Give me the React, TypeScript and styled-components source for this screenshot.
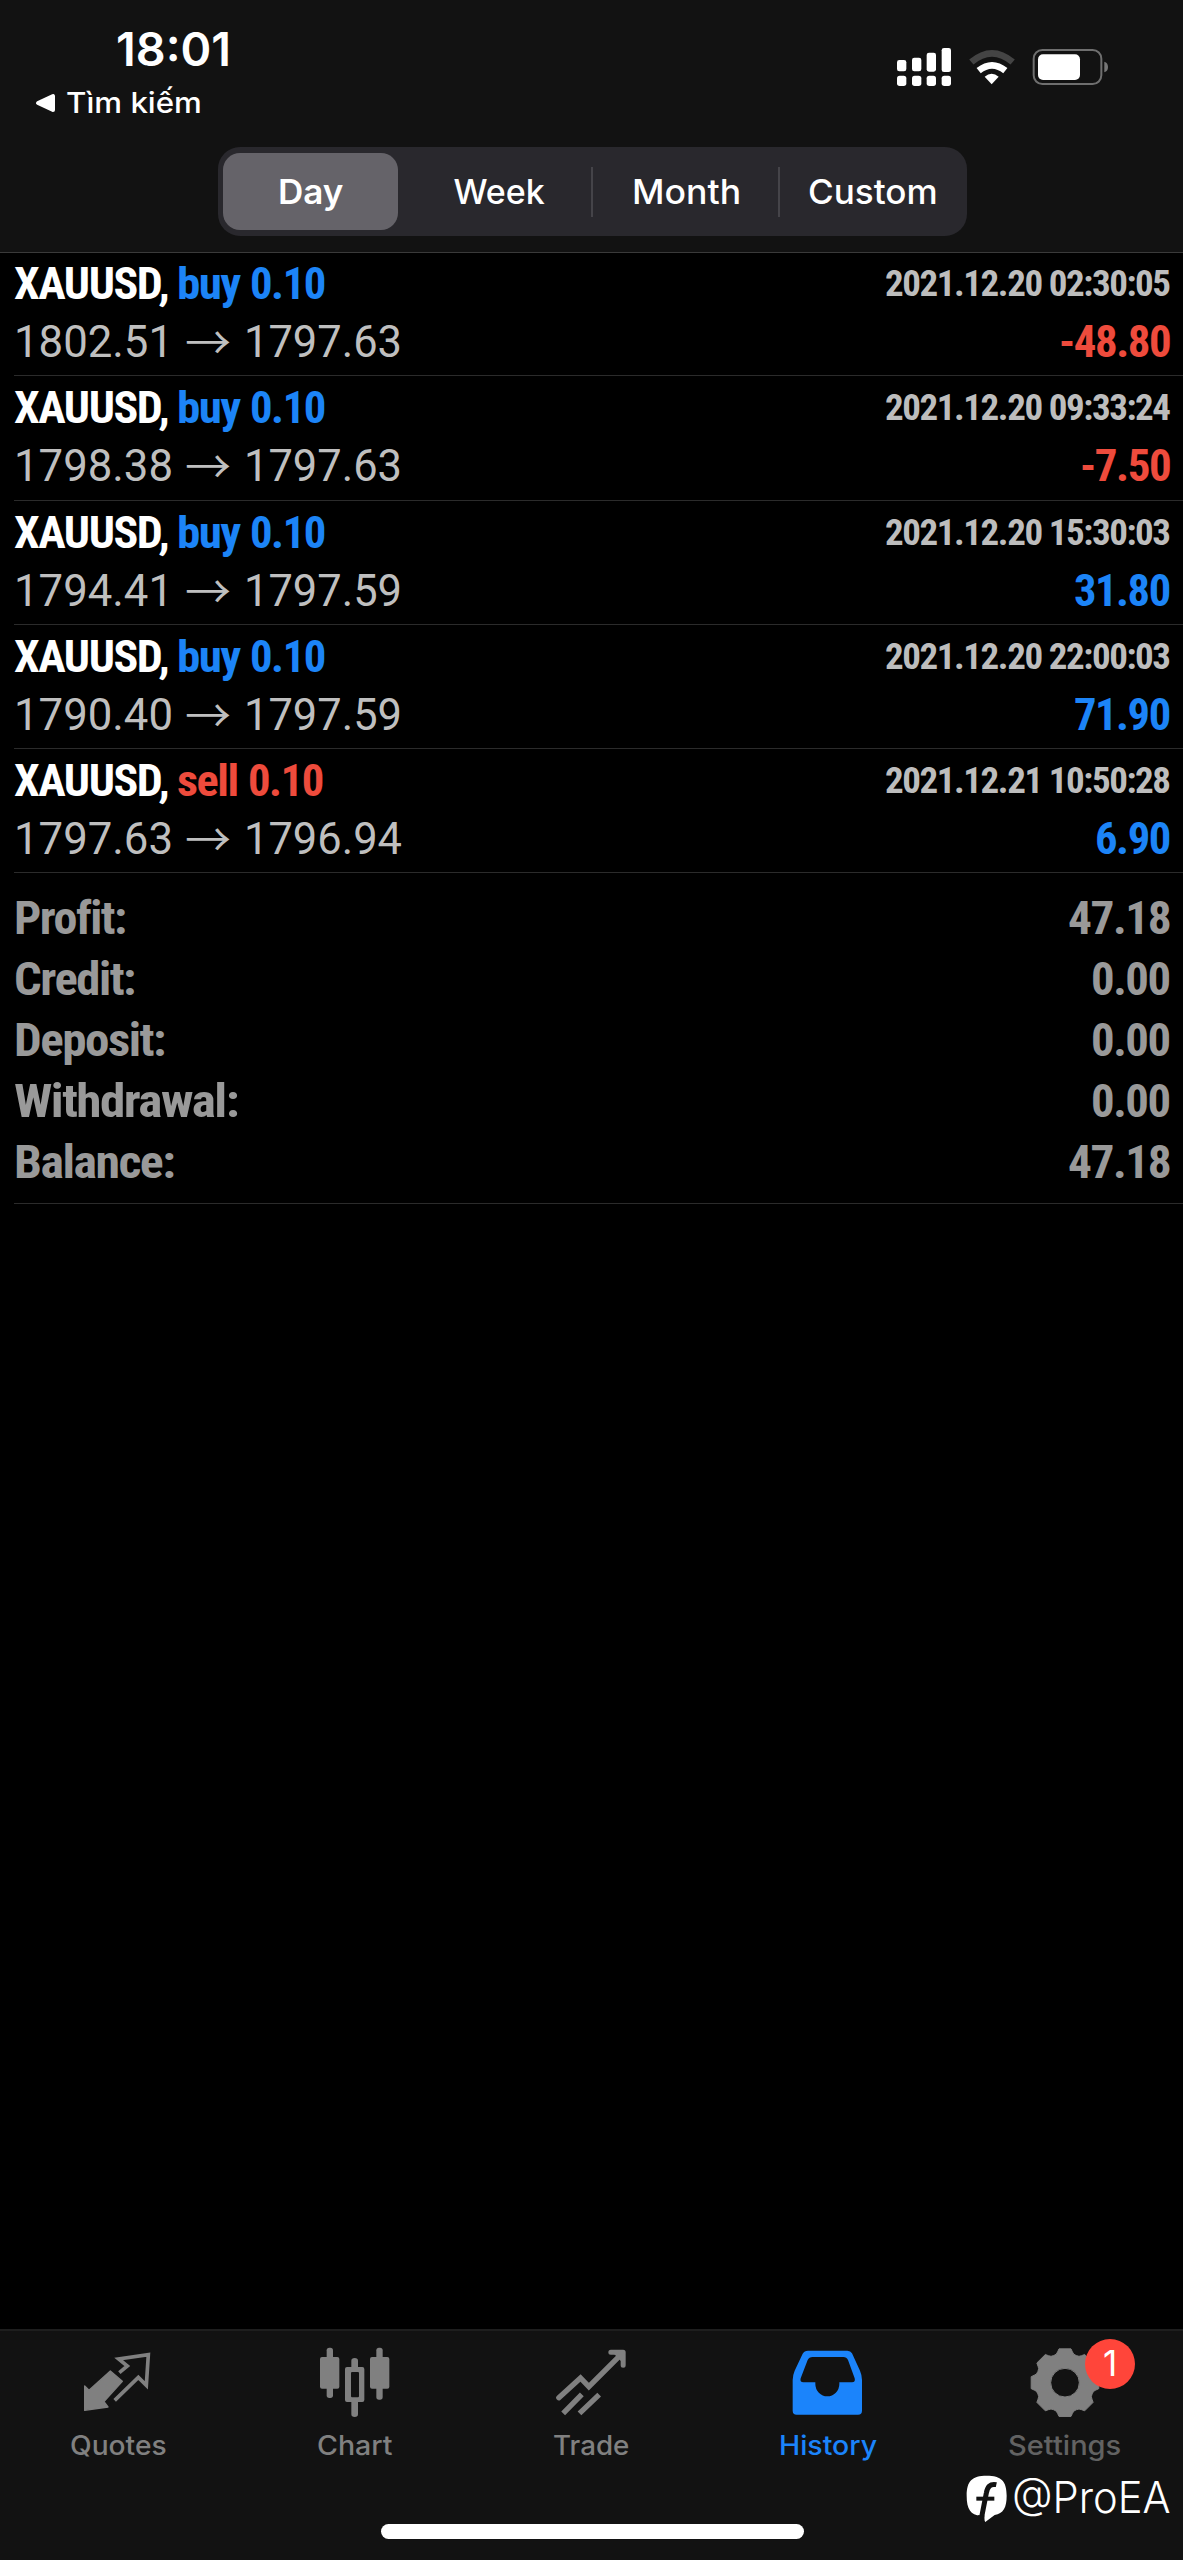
import React, { useLayoutEffect, useRef, useState } from 'react';
import styled, { createGlobalStyle } from 'styled-components';

const BLUE = '#1c84f7';
const RED = '#ee4b3c';
const BAR = '#121212';
const GREY = '#808080';

const Global = createGlobalStyle`
  * { box-sizing: border-box; }
  html, body { margin: 0; padding: 0; background: #000; }
  body { font-family: Inter, "Liberation Sans", sans-serif; }
`;

const Screen = styled.div`
  position: relative;
  display: flex;
  flex-direction: column;
  width: 1183px;
  height: 2560px;
  background: #000;
  overflow: hidden;
`;

/* ---------- text squeezed to a given advance width ---------- */
type Align = 'left' | 'right';

const FitBox = styled.span<{ $w: number; $align: Align }>`
  display: inline-flex;
  flex: none;
  width: ${p => p.$w}px;
  justify-content: ${p => (p.$align === 'right' ? 'flex-end' : 'flex-start')};
`;

const FitInner = styled.span<{ $align: Align }>`
  flex: none;
  white-space: pre;
  transform-origin: ${p => p.$align} center;
`;

function Fit({ w, align = 'left', children }: { w: number; align?: Align; children: React.ReactNode }) {
  const ref = useRef<HTMLSpanElement>(null);
  const [scale, setScale] = useState(1);
  useLayoutEffect(() => {
    if (ref.current && ref.current.offsetWidth) setScale(w / ref.current.offsetWidth);
  }, [w, children]);
  return (
    <FitBox $w={w} $align={align}>
      <FitInner ref={ref} $align={align} style={{ transform: `scaleX(${scale})` }}>
        {children}
      </FitInner>
    </FitBox>
  );
}

/* ---------- header ---------- */
const Header = styled.header`
  flex: none;
  height: 252px;
  background: ${BAR};
  box-shadow: 0 1px 0 #3a3a3a;
`;

const StatusBar = styled.div`
  display: flex;
  justify-content: space-between;
  height: 147px;
  padding: 21px 53px 0 35px;
`;

const Clock = styled.div`
  padding-left: 80.5px;
  height: 64px;
  line-height: 56px;
  font-size: 46.5px;
  font-weight: 600;
  color: #fff;
`;

const BackLink = styled.div`
  display: flex;
  align-items: center;
  gap: 10px;
  line-height: 36px;
  font-size: 28.5px;
  font-weight: 450;
  color: #fff;
`;

const StatusIcons = styled.svg`
  width: 240px;
  height: 50px;
  margin-top: 19px;
  margin-right: 10px;
`;

const Segments = styled.div`
  display: flex;
  align-items: center;
  width: 749px;
  height: 89px;
  margin-left: 218px;
  border-radius: 22px;
  background: #29282d;
`;

const Segment = styled.div<{ $divided?: boolean }>`
  display: flex;
  flex: 1;
  align-items: center;
  justify-content: center;
  height: 50px;
  box-shadow: ${p => (p.$divided ? '-2px 0 0 #454449' : 'none')};
  font-size: 34px;
  line-height: 50px;
  font-weight: 480;
  color: #fff;
`;

const Pill = styled.div`
  display: flex;
  align-items: center;
  justify-content: center;
  width: 175px;
  height: 77px;
  margin-right: 2px;
  border-radius: 17px;
  background: #656369;
  font-weight: 560;
`;

/* ---------- deals ---------- */
const Condensed = styled.div`
  font-family: Roboto, "Liberation Sans", sans-serif;
  font-stretch: 82%;
  font-weight: 700;
  letter-spacing: -1.4px;
`;

const Deal = styled(Condensed)`
  display: grid;
  grid-template-columns: auto auto;
  grid-template-rows: 62px 55px;
  justify-content: space-between;
  height: 124.3px;
  margin-left: 14px;
  padding-top: 1px;
  padding-right: 13px;
  border-bottom: 1px solid #2b2b2b;
`;

const Title = styled.div`
  display: flex;
  font-size: 44px;
  line-height: 62px;
  color: #fff;
`;

const Side = styled.span<{ $sell?: boolean }>`
  display: flex;
  gap: 10px;
  color: ${p => (p.$sell ? RED : BLUE)};
`;

const DateTime = styled.div`
  display: flex;
  justify-content: flex-end;
  font-size: 36.2px;
  line-height: 61px;
  color: #bdbdbd;
`;

const Prices = styled.div`
  display: flex;
  font-size: 44px;
  line-height: 55px;
  font-weight: 370;
  font-stretch: 100%;
  letter-spacing: 0;
  color: #bfbfbf;
`;

const Arrow = styled.span`
  width: 71px;
  padding-left: 12px;
  font-family: "Noto Sans CJK SC", sans-serif;
  font-weight: 350;
  font-size: 46px;
  line-height: 49px;
`;

const Result = styled.div<{ $loss?: boolean }>`
  display: flex;
  justify-content: flex-end;
  font-size: 44px;
  line-height: 55px;
  color: ${p => (p.$loss ? RED : BLUE)};
`;

const Summary = styled(Condensed)`
  margin-left: 14px;
  padding: 14.3px 13px 10.7px 0;
  border-bottom: 1px solid #2b2b2b;
`;

const SummaryRow = styled.div`
  display: flex;
  justify-content: space-between;
  height: 61px;
  font-size: 45.5px;
  line-height: 61px;
  color: #999;
`;

const Spacer = styled.div`
  flex: 1;
`;

/* ---------- tab bar ---------- */
const TabBar = styled.nav`
  position: relative;
  flex: none;
  display: flex;
  height: 231px;
  padding-top: 9px;
  border-top: 2px solid #1e1e1e;
  background: ${BAR};
`;

const Tab = styled.div<{ $active?: boolean }>`
  display: flex;
  flex: 1;
  flex-direction: column;
  align-items: center;
  color: ${p => (p.$active ? '#1b84fb' : GREY)};
`;

const TabIcon = styled.div`
  position: relative;
  width: 80px;
  height: 80px;
  svg { display: block; width: 80px; height: 80px; }
`;

const TabLabel = styled.div<{ $dim?: boolean }>`
  font-size: 27px;
  line-height: 51px;
  font-weight: 500;
  color: ${p => (p.$dim ? '#626262' : 'inherit')};
`;

const Badge = styled.span`
  position: absolute;
  left: 60.5px;
  top: -1.5px;
  width: 50px;
  height: 50px;
  border-radius: 50%;
  background: #ff453a;
  color: #fff;
  font-size: 35px;
  line-height: 49px;
  text-align: center;
`;

const HomeIndicator = styled.div`
  position: absolute;
  left: 381px;
  bottom: 21px;
  width: 423px;
  height: 15px;
  border-radius: 8px;
  background: #fff;
`;

const Watermark = styled.div`
  position: absolute;
  left: 966px;
  bottom: 33px;
  display: flex;
  align-items: center;
  gap: 4px;
  font-size: 43px;
  line-height: 60px;
  font-weight: 330;
  color: #fff;
  svg { width: 42px; height: 48px; margin-top: 4px; }
`;

/* ---------- drawings ---------- */
const gearPath = (() => {
  const cx = 845, cy = 218;
  const pts: string[] = [];
  for (let k = 0; k < 8; k++) {
    [[-22.5, 88], [-17, 89.5], [-13.5, 95], [-10, 103], [10, 103], [13.5, 95], [17, 89.5]].forEach(([d, r]) => {
      const a = ((k * 45 + d - 90) * Math.PI) / 180;
      pts.push(`${(cx + r * Math.cos(a)).toFixed(1)} ${(cy + r * Math.sin(a)).toFixed(1)}`);
    });
  }
  return `M${pts.join('L')}ZM888 218A43 43 0 1 0 802 218A43 43 0 1 0 888 218Z`;
})();

const QuotesIcon = () => (
  <svg viewBox="235 90 240 240" fill="none">
    <path d="M255 228L268 241L332 183L368 214L313 275L325 291L255 301Z" fill="currentColor" stroke="currentColor" strokeWidth="4" strokeLinejoin="round" />
    <path d="M359 188L383 168L357 147L446 134L440 226L416 202L345 271" stroke="currentColor" strokeWidth="11" />
  </svg>
);

const ChartIcon = () => (
  <svg viewBox="945 90 240 240" fill="currentColor">
    <rect x="960" y="141" width="58" height="95" rx="6" />
    <rect x="980" y="113" width="19" height="151" rx="8" />
    <rect x="1110" y="141" width="58" height="95" rx="6" />
    <rect x="1129" y="113" width="19" height="156" rx="8" />
    <path fillRule="evenodd" d="M1041 171H1054V152Q1054 144 1064 144Q1074 144 1074 152V171H1087Q1093 171 1093 177V270Q1093 276 1087 276H1074V313Q1074 321 1064 321Q1054 321 1054 313V276H1041Q1035 276 1035 270V177Q1035 171 1041 171ZM1056 186Q1053 186 1053 190V258Q1053 262 1056 262H1074Q1077 262 1077 258V190Q1077 186 1074 186Z" />
  </svg>
);

const TradeIcon = () => (
  <svg viewBox="454.5 90 240 240" fill="none" stroke="currentColor">
    <path d="M478 263L543 204L568 230L662 136" strokeWidth="16" strokeLinecap="round" />
    <path d="M634 127H671V166" strokeWidth="15" strokeLinecap="round" strokeLinejoin="round" />
    <path d="M645 130H670V156Z" fill="currentColor" strokeWidth="4" />
    <path d="M491 310L547 253M540 310L599 254" strokeWidth="16" />
  </svg>
);

const HistoryIcon = () => (
  <svg viewBox="24 30 240 240" fill="currentColor">
    <path fillRule="evenodd" d="M84 62H202Q212 62 216 70L240 122Q246 136 246 150V242Q246 254 234 254H50Q38 254 38 242V150Q38 136 44 122L68 71Q73 62 84 62ZM98 81Q87 81 83 90L62 145Q59 157 70 157H106V162A36 37 0 0 0 178 162V157H216Q227 157 224 145L204 90Q200 81 190 81Z" />
  </svg>
);

const SettingsIcon = () => (
  <svg viewBox="725 90 240 240" fill="currentColor">
    <path fillRule="evenodd" d={gearPath} stroke="currentColor" strokeWidth="3" strokeLinejoin="round" />
  </svg>
);

const BubbleLogo = () => (
  <svg viewBox="18 436 126 144" fill="none">
    <path d="M80 438C124 438 140 454 140 498C140 534 130 551 104 556L76 577L62 558C32 556 20 538 20 498C20 454 36 438 80 438Z" fill="#fff" />
    <path d="M109 465C90 461 82 472 79 490L65 562" stroke={BAR} strokeWidth="15" />
    <path d="M49 507H103" stroke={BAR} strokeWidth="12" />
    <path d="M54 557L73 557L74 580L54 580Z" fill={BAR} />
  </svg>
);

const PhoneStatus = () => (
  <StatusIcons viewBox="0 0 720 150">
    <g fill="#fff">
      <rect x="51" y="60" width="28" height="34" rx="7" />
      <rect x="96" y="53" width="28" height="41" rx="7" />
      <rect x="140" y="38" width="28" height="57" rx="7" />
      <rect x="185" y="24" width="28" height="72" rx="7" />
      <rect x="51" y="107" width="28" height="31" rx="8" />
      <rect x="96" y="107" width="28" height="31" rx="8" />
      <rect x="140" y="107" width="28" height="31" rx="8" />
      <rect x="185" y="107" width="28" height="31" rx="8" />
    </g>
    <g fill="none" strokeWidth="20">
      <path d="M274 66Q336 14 398 66" stroke="#444" />
      <path d="M296 92Q336 60 376 92" stroke="#fff" />
    </g>
    <path d="M314 110Q335 92 356 110L335 133Z" fill="#fff" />
    <rect x="461" y="30" width="203" height="102" rx="26" fill="none" stroke="#6f6f6f" strokeWidth="6" />
    <rect x="474" y="43" width="126" height="77" rx="15" fill="#fff" />
    <path d="M673 65Q684 68 684 81Q684 94 673 97Z" fill="#777" />
  </StatusIcons>
);

/* ---------- data ---------- */
interface DealData {
  side: 'buy' | 'sell';
  open: string;
  close: string;
  time: string;
  result: string;
  resultWidth: number;
}

const deals: DealData[] = [
  { side: 'buy', open: '1802.51', close: '1797.63', time: '2021.12.20 02:30:05', result: '-48.80', resultWidth: 111 },
  { side: 'buy', open: '1798.38', close: '1797.63', time: '2021.12.20 09:33:24', result: '-7.50', resultWidth: 90 },
  { side: 'buy', open: '1794.41', close: '1797.59', time: '2021.12.20 15:30:03', result: '31.80', resultWidth: 96 },
  { side: 'buy', open: '1790.40', close: '1797.59', time: '2021.12.20 22:00:03', result: '71.90', resultWidth: 96 },
  { side: 'sell', open: '1797.63', close: '1796.94', time: '2021.12.21 10:50:28', result: '6.90', resultWidth: 75 },
];

const totals = [
  { label: 'Profit:', labelWidth: 112, value: '47.18', valueWidth: 102 },
  { label: 'Credit:', labelWidth: 121, value: '0.00', valueWidth: 79 },
  { label: 'Deposit:', labelWidth: 151, value: '0.00', valueWidth: 79 },
  { label: 'Withdrawal:', labelWidth: 224, value: '0.00', valueWidth: 79 },
  { label: 'Balance:', labelWidth: 160, value: '47.18', valueWidth: 102 },
];

const segments = [
  { name: 'Day', width: 66 },
  { name: 'Week', width: 91 },
  { name: 'Month', width: 109 },
  { name: 'Custom', width: 130 },
];

const tabs = [
  { name: 'Quotes', width: 97, Icon: QuotesIcon },
  { name: 'Chart', width: 75, Icon: ChartIcon },
  { name: 'Trade', width: 76, Icon: TradeIcon },
  { name: 'History', width: 98, Icon: HistoryIcon },
  { name: 'Settings', width: 113, Icon: SettingsIcon },
];

export default function App() {
  return (
    <Screen>
      <Global />
      <Header>
        <StatusBar>
          <div>
            <Clock><Fit w={115.5}>18:01</Fit></Clock>
            <BackLink>
              <svg width="21" height="22" viewBox="0 0 21 22"><path d="M3 11L18 4V18Z" fill="#fff" stroke="#fff" strokeWidth="4" strokeLinejoin="round" /></svg>
              <Fit w={136}>Tìm kiếm</Fit>
            </BackLink>
          </div>
          <PhoneStatus />
        </StatusBar>
        <Segments>
          {segments.map((s, i) => (
            <Segment key={s.name} $divided={i > 1}>
              {i === 0 ? <Pill><Fit w={s.width}>{s.name}</Fit></Pill> : <Fit w={s.width}>{s.name}</Fit>}
            </Segment>
          ))}
        </Segments>
      </Header>

      <main>
        {deals.map(d => (
          <Deal key={d.time}>
            <Title>
              <Fit w={163}>XAUUSD, </Fit>
              <Side $sell={d.side === 'sell'}>
                <Fit w={d.side === 'sell' ? 61 : 63}>{d.side}</Fit>
                <Fit w={75}>0.10</Fit>
              </Side>
            </Title>
            <DateTime><Fit w={285} align="right">{d.time}</Fit></DateTime>
            <Prices>
              <Fit w={159}>{d.open}</Fit>
              <Arrow>→</Arrow>
              <Fit w={158}>{d.close}</Fit>
            </Prices>
            <Result $loss={d.result.startsWith('-')}>
              <Fit w={d.resultWidth} align="right">{d.result}</Fit>
            </Result>
          </Deal>
        ))}
        <Summary>
          {totals.map(t => (
            <SummaryRow key={t.label}>
              <Fit w={t.labelWidth}>{t.label}</Fit>
              <Fit w={t.valueWidth} align="right">{t.value}</Fit>
            </SummaryRow>
          ))}
        </Summary>
      </main>

      <Spacer />

      <TabBar>
        {tabs.map(({ name, width, Icon }) => (
          <Tab key={name} $active={name === 'History'}>
            <TabIcon>
              <Icon />
              {name === 'Settings' && <Badge>1</Badge>}
            </TabIcon>
            <TabLabel $dim={name === 'Settings'}><Fit w={width}>{name}</Fit></TabLabel>
          </Tab>
        ))}
        <HomeIndicator />
        <Watermark>
          <BubbleLogo />
          <Fit w={159}>@ProEA</Fit>
        </Watermark>
      </TabBar>
    </Screen>
  );
}
